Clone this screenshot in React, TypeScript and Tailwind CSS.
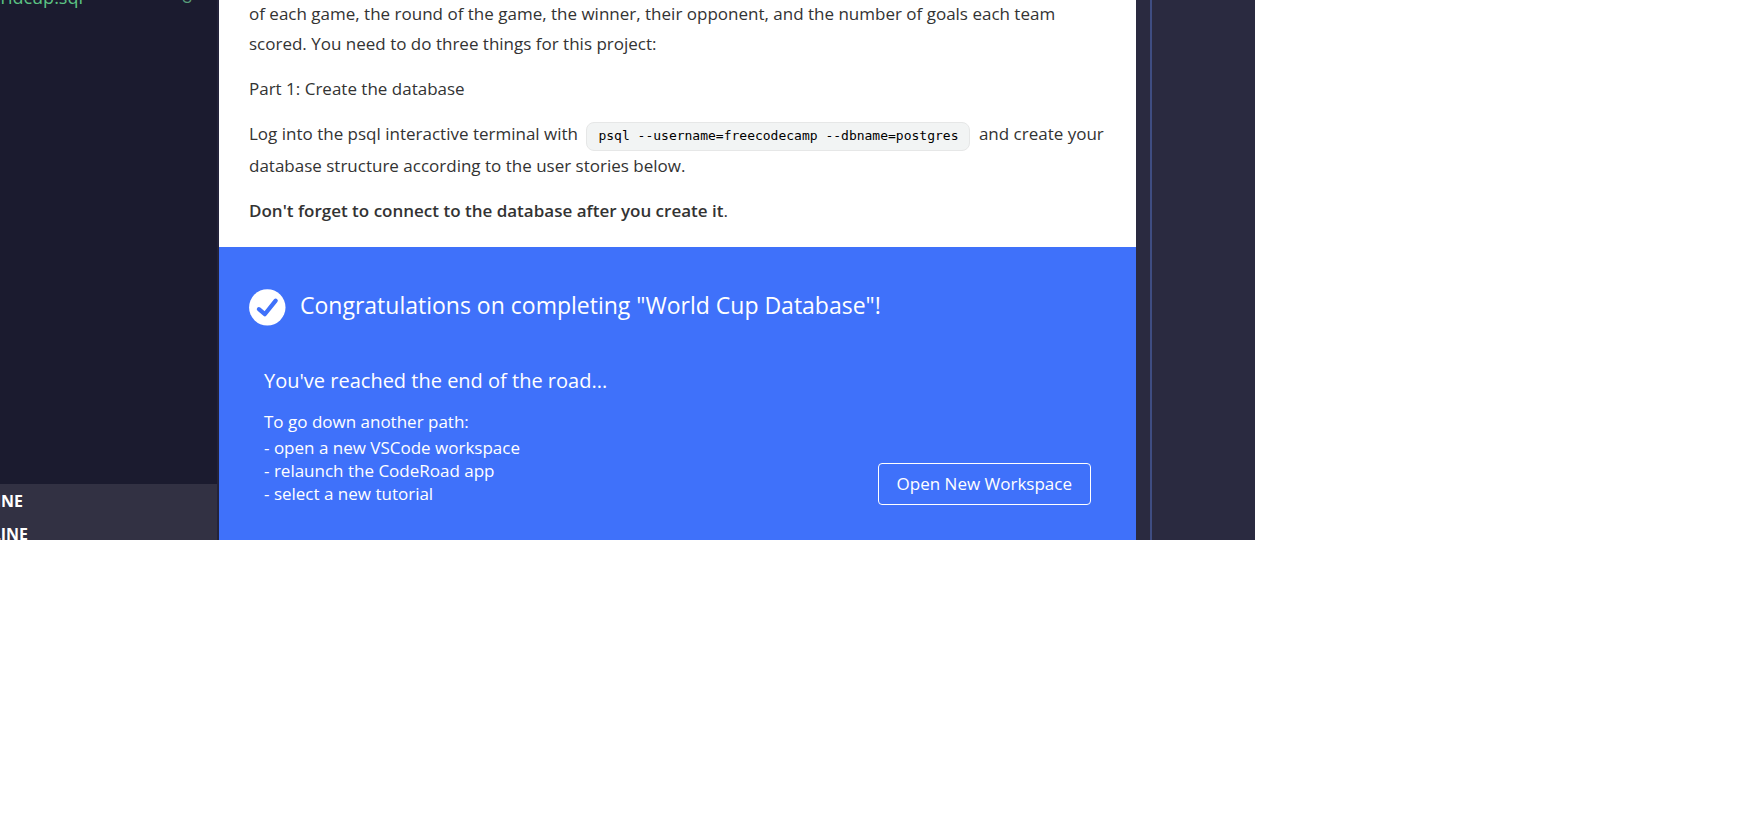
const instructions = "text-[17px] leading-[30px] text-[#333333]";

function Explorer() {
  return (
    <aside className="flex w-[219px] shrink-0 flex-col overflow-hidden border-r-2 border-[#24233a] bg-[#1b1b2f]">
      <div className="-mt-[18px] flex h-[30px] items-center justify-between pr-6 text-lg text-[#5cc283]">
        <span className="flex w-[83px] justify-end">worldcup.sql</span>
        <span className="text-base text-[#579c79]">U</span>
      </div>
      <div className="mt-auto flex h-14 flex-col overflow-hidden bg-[#323143] pt-px text-base leading-[33px] font-bold text-white">
        <h2 className="flex h-[33px] w-[23px] shrink-0 justify-end">OUTLINE</h2>
        <h2 className="flex h-[33px] w-7 shrink-0 justify-end">TIMELINE</h2>
      </div>
    </aside>
  );
}

function CheckIcon() {
  return (
    <svg viewBox="0 0 37 37" className="size-[37px] shrink-0" aria-hidden="true">
      <circle cx="18.3" cy="18.4" r="18.2" fill="#fff" />
      <path d="M9.9 20.2 15.8 25.2 26.7 11.6" fill="none" stroke="#3f71fa" strokeWidth="4.2" strokeLinecap="round" strokeLinejoin="round" />
    </svg>
  );
}

export default function App() {
  return (
    <div className="min-h-screen bg-white font-['Open_Sans',sans-serif]">
      <div className="flex h-[540px] max-w-[1255px] overflow-hidden">
        <Explorer />
        <main className="flex min-w-0 flex-1 flex-col">
          <section className={`-mt-px flex flex-1 flex-col gap-[15px] px-[30px] ${instructions}`}>
            <p>
              of each game, the round of the game, the winner, their opponent, and the number of goals each team
              <br />
              scored. You need to do three things for this project:
            </p>
            <p>Part 1: Create the database</p>
            <p>
              Log into the psql interactive terminal with{" "}
              <code className="mx-1 inline-block rounded-lg border border-[#e6e7e7] bg-[#f2f4f4] px-[11px] pb-px font-['DejaVu_Sans_Mono',monospace] text-[13px] leading-[26px] text-black">
                psql --username=freecodecamp --dbname=postgres
              </code>{" "}
              and create your
              <br />
              database structure according to the user stories below.
            </p>
            <p>
              <strong className="font-semibold">Don't forget to connect to the database after you create it</strong>.
            </p>
          </section>
          <section className="flex h-[293px] shrink-0 flex-col bg-[#3f71fa] px-[30px] pt-[42px] text-white">
            <div className="flex items-start gap-3.5">
              <CheckIcon />
              <h1 className="text-[23px] leading-8">Congratulations on completing "World Cup Database"!</h1>
            </div>
            <div className="mt-[35px] flex items-end justify-between px-[15px]">
              <div>
                <h2 className="text-xl leading-10">You've reached the end of the road...</h2>
                <p className="mt-[7px] text-[17px] leading-7">To go down another path:</p>
                <ul className="text-[17px] leading-[23px]">
                  <li>- open a new VSCode workspace</li>
                  <li>- relaunch the CodeRoad app</li>
                  <li>- select a new tutorial</li>
                </ul>
              </div>
              <button type="button" className="h-[42px] rounded border border-white px-[18px] text-[17px]">
                Open New Workspace
              </button>
            </div>
          </section>
        </main>
        <aside className="w-[119px] shrink-0 bg-[#2a2a40] pl-3.5">
          <div className="h-full border-l-2 border-[#3f4d82]" />
        </aside>
      </div>
    </div>
  );
}
